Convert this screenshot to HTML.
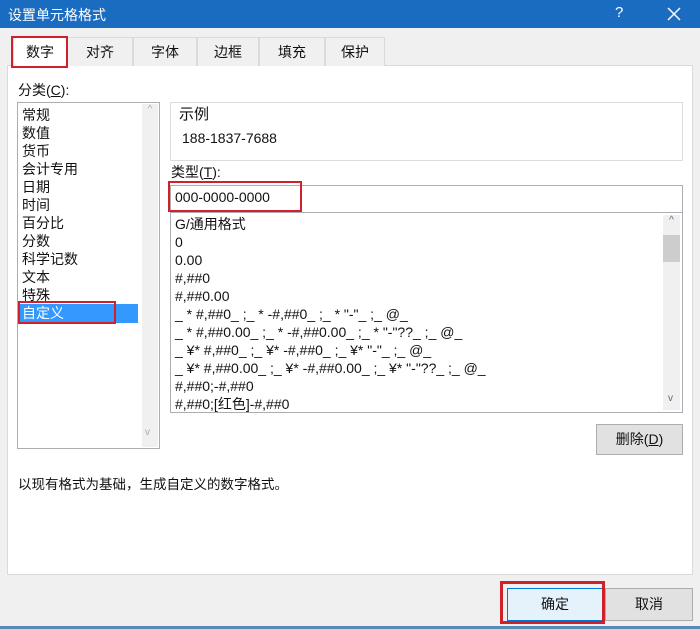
<!DOCTYPE html>
<html><head><meta charset="utf-8"><style>
*{margin:0;padding:0;box-sizing:border-box}
body{width:700px;height:629px;background:#f0f0f0;font-family:"Liberation Sans","Noto Sans CJK SC",sans-serif;font-size:14px;color:#111;position:relative;overflow:hidden}
.a{position:absolute}
.title{left:0;top:0;width:700px;height:28px;background:#1a6cc0;color:#fff}
.panel{left:7px;top:65px;width:686px;height:510px;background:#fff;border:1px solid #dadada}
.tab{top:37px;height:29px;background:#f0f0f0;border:1px solid #dadada;border-bottom:none;text-align:center;line-height:28px}
.box{border:1px solid #abadb3;background:#fff}
.li{left:22px;line-height:18px}
.fl{left:175px;line-height:18px;white-space:pre;font-size:14px}
.red{border:2px solid #d0202a}
.btn{background:#e1e1e1;border:1px solid #adadad;text-align:center}
</style></head><body>
<div class="a title"><span class="a" style="left:8px;top:5px;font-size:14px">设置单元格格式</span><span class="a" style="left:615px;top:4px;font-size:15px">?</span><svg class="a" style="left:667px;top:7px" width="14" height="14"><path d="M1 1L13 13M13 1L1 13" stroke="#fff" stroke-width="1.5"/></svg></div>
<div class="a panel"></div>
<div class="a tab" style="left:13px;width:54px;background:#fff;height:30px">数字</div>
<div class="a tab" style="left:67px;width:66px">对齐</div>
<div class="a tab" style="left:133px;width:64px">字体</div>
<div class="a tab" style="left:197px;width:62px">边框</div>
<div class="a tab" style="left:259px;width:66px">填充</div>
<div class="a tab" style="left:325px;width:60px">保护</div>
<div class="a red" style="left:11px;top:36px;width:57px;height:32px"></div>
<div class="a" style="left:18px;top:80px">分类(<u>C</u>):</div>
<div class="a box" style="left:17px;top:102px;width:143px;height:347px"></div>
<div class="a" style="left:142px;top:104px;width:16px;height:343px;background:#f0f0f0;color:#aaa;font-size:10px;text-align:center">^<div class="a" style="top:323px;left:3px">v</div></div>
<div class="a" style="left:19px;top:304px;width:119px;height:19px;background:#3399ff"></div>
<div class="a li" style="top:106px">常规<br>数值<br>货币<br>会计专用<br>日期<br>时间<br>百分比<br>分数<br>科学记数<br>文本<br>特殊<br><span style="color:#fff">自定义</span></div>
<div class="a red" style="left:18px;top:301px;width:98px;height:23px"></div>
<div class="a" style="left:170px;top:102px;width:513px;height:59px;border:1px solid #dcdcdc"></div>
<div class="a" style="left:176px;top:103px;background:#fff;padding:0 3px;font-size:15px">示例</div>
<div class="a" style="left:182px;top:130px">188-1837-7688</div>
<div class="a" style="left:171px;top:162px">类型(<u>T</u>):</div>
<div class="a box" style="left:170px;top:185px;width:513px;height:28px"></div>
<div class="a" style="left:175px;top:189px">000-0000-0000</div>
<div class="a red" style="left:168px;top:181px;width:134px;height:31px"></div>
<div class="a box" style="left:170px;top:212px;width:513px;height:201px"></div>
<div class="a" style="left:663px;top:215px;width:17px;height:195px;background:#f0f0f0;color:#666;font-size:10px;text-align:center">^<div class="a" style="left:0;top:20px;width:17px;height:27px;background:#cdcdcd"></div><div class="a" style="top:178px;left:5px">v</div></div>
<div class="a fl" style="top:215px">G/通用格式
0
0.00
#,##0
#,##0.00
_ * #,##0_ ;_ * -#,##0_ ;_ * "-"_ ;_ @_
_ * #,##0.00_ ;_ * -#,##0.00_ ;_ * "-"??_ ;_ @_
_ ¥* #,##0_ ;_ ¥* -#,##0_ ;_ ¥* "-"_ ;_ @_
_ ¥* #,##0.00_ ;_ ¥* -#,##0.00_ ;_ ¥* "-"??_ ;_ @_
#,##0;-#,##0
#,##0;[红色]-#,##0</div>
<div class="a btn" style="left:596px;top:424px;width:87px;height:31px;line-height:29px">删除(<u>D</u>)</div>
<div class="a" style="left:18px;top:473px;font-size:13.5px">以现有格式为基础，生成自定义的数字格式。</div>
<div class="a btn" style="left:507px;top:588px;width:96px;height:33px;line-height:31px;border:1px solid #0078d7;background:#e5f1fb">确定</div>
<div class="a btn" style="left:605px;top:588px;width:88px;height:33px;line-height:31px">取消</div>
<div class="a red" style="left:500px;top:581px;width:105px;height:43px;border-width:3px"></div>
<div class="a" style="left:0;top:626px;width:700px;height:3px;background:#5a8ab5"></div>
</body></html>
